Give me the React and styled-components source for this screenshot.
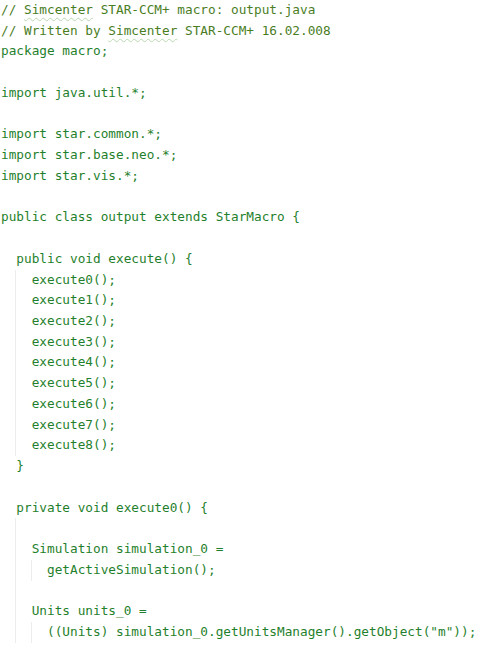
import React from "react";
import styled, { createGlobalStyle } from "styled-components";

const GlobalStyle = createGlobalStyle`
  html, body {
    margin: 0;
    padding: 0;
    background: #ffffff;
  }
`;

const Editor = styled.div`
  width: 503px;
  height: 646px;
  overflow: hidden;
  padding-left: 1px;
  box-sizing: border-box;
  font-family: "DejaVu Sans Mono", "Liberation Mono", monospace;
  font-size: 12.74px;
  color: #1f7f2c;
`;

const Line = styled.div`
  height: 20.74px;
  line-height: 20.74px;
  white-space: pre;
  color: ${(p) => (p.$comment ? "#4a7d1f" : "#1f7f2c")};
`;

const Block = styled.div`
  margin-left: calc(${(p) => p.$col}ch - 1px);
  padding-left: 2ch;
  border-left: 1px solid #ececec;
`;

const Typo = styled.span`
  text-decoration: underline wavy #b9d7b0;
  text-decoration-thickness: 1px;
  text-underline-offset: 3px;
`;

const Blank = () => <Line> </Line>;

const calls = [0, 1, 2, 3, 4, 5, 6, 7, 8];

export default function App() {
  return (
    <Editor>
      <GlobalStyle />
      <Line $comment>
        // <Typo>Simcenter</Typo> STAR-CCM+ macro: output.java
      </Line>
      <Line $comment>
        // Written by <Typo>Simcenter</Typo> STAR-CCM+ 16.02.008
      </Line>
      <Line>package macro;</Line>
      <Blank />
      <Line>import java.util.*;</Line>
      <Blank />
      <Line>import star.common.*;</Line>
      <Line>import star.base.neo.*;</Line>
      <Line>import star.vis.*;</Line>
      <Blank />
      <Line>public class output extends StarMacro {"{"}</Line>
      <Blank />
      <Line>{"  public void execute() {"}</Line>
      <Block $col={2}>
        {calls.map((n) => (
          <Line key={n}>{`execute${n}();`}</Line>
        ))}
      </Block>
      <Line>{"  }"}</Line>
      <Blank />
      <Line>{"  private void execute0() {"}</Line>
      <Block $col={2}>
        <Blank />
        <Line>Simulation simulation_0 =</Line>
        <Block $col={0}>
          <Line>getActiveSimulation();</Line>
        </Block>
        <Blank />
        <Line>Units units_0 =</Line>
        <Block $col={0}>
          <Line>((Units) simulation_0.getUnitsManager().getObject("m"));</Line>
        </Block>
      </Block>
    </Editor>
  );
}
